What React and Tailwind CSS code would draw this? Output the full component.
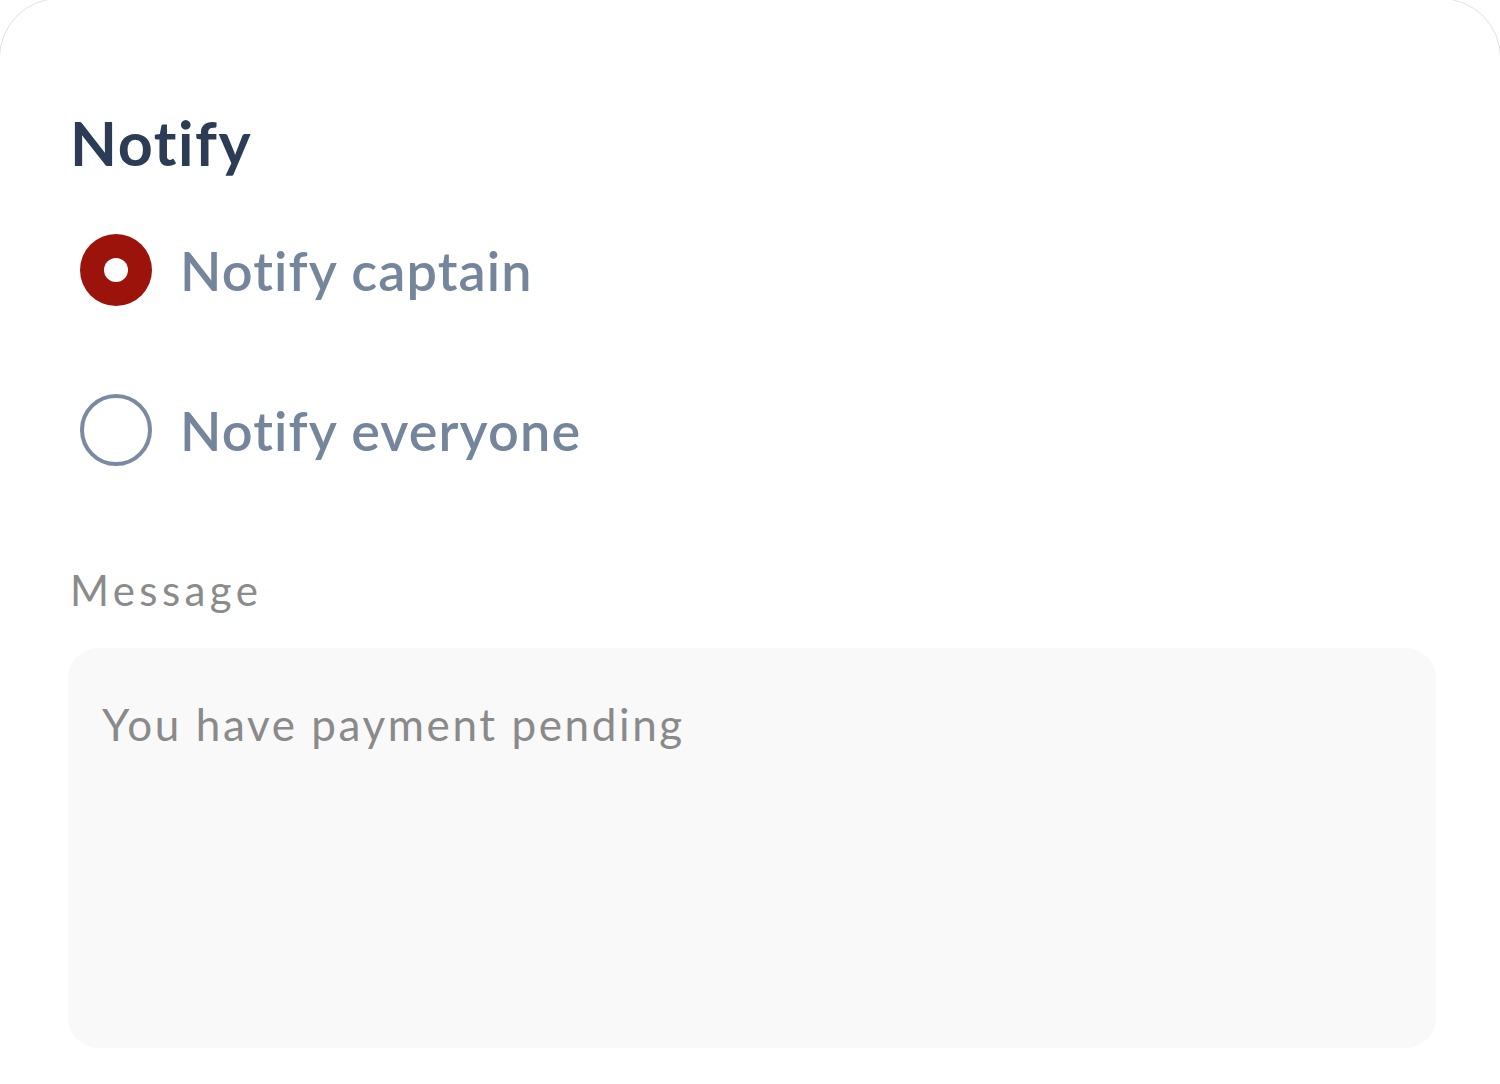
const OPTIONS = [
  { id: "captain", label: "Notify captain" },
  { id: "everyone", label: "Notify everyone" },
];

function Radio({ checked }) {
  if (checked) {
    return (
      <span className="flex h-[72px] w-[72px] shrink-0 items-center justify-center rounded-full bg-[#9b130b]">
        <span className="h-[24px] w-[24px] rounded-full bg-white" />
      </span>
    );
  }
  return <span className="h-[72px] w-[72px] shrink-0 rounded-full border-[4px] border-[#7b8aa1]" />;
}

export default function App() {
  const selected = "captain";

  return (
    <div className="h-[1084px] w-[1500px] overflow-hidden bg-white" style={{ fontFamily: "Lato, 'Noto Sans', sans-serif" }}>
      <div className="-mx-px -mt-[2px] h-[1200px] rounded-t-[60px] border border-[#e2e2e2] bg-white pl-[70px] pr-[64px] pt-[104px]">
        <h1 className="text-[61px] font-bold leading-[80px] tracking-[1.6px] text-[#2d3c55]">Notify</h1>

        <div className="mt-[51px] flex flex-col gap-[88px] pl-[10px]">
          {OPTIONS.map((o) => (
            <label key={o.id} className="flex h-[72px] items-center gap-[28px]">
              <Radio checked={o.id === selected} />
              <span className="text-[54px] font-semibold tracking-[1.1px] text-[#75859c]">{o.label}</span>
            </label>
          ))}
        </div>

        <p className="mt-[99px] text-[42px] leading-[50px] tracking-[4.4px] text-[#8b8b8b]">Message</p>

        <div className="mt-[33px] h-[400px] w-[1368px] -ml-[2px] rounded-[30px] bg-[#f9f9f9] px-[34px] pt-[48px]">
          <p className="text-[44px] leading-[56px] tracking-[2.6px] text-[#8a8a8a]">You have payment pending</p>
        </div>
      </div>
    </div>
  );
}
